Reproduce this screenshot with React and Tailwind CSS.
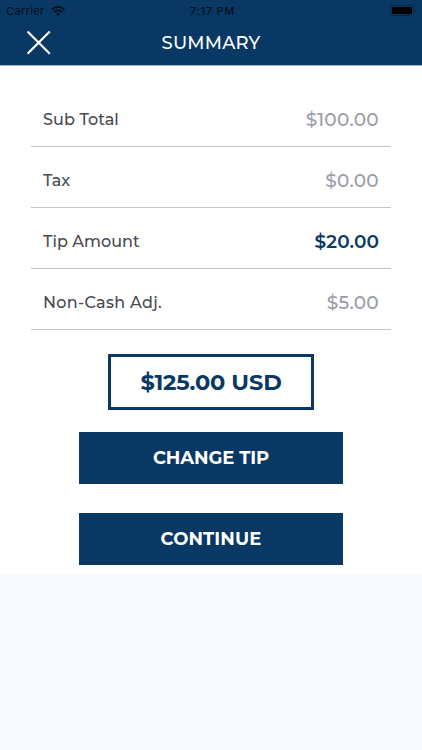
const rows = [
  {
    label: "Sub Total",
    value: "$100.00",
    labelClass: "tracking-[0.1px]",
    valueClass: "tracking-[0.3px] font-medium text-[#9b9ca6]",
  },
  {
    label: "Tax",
    value: "$0.00",
    labelClass: "tracking-[-0.1px]",
    valueClass: "tracking-[0.3px] font-medium text-[#9b9ca6]",
  },
  {
    label: "Tip Amount",
    value: "$20.00",
    labelClass: "tracking-[0.05px]",
    valueClass: "tracking-[0.1px] font-semibold text-[#083863]",
  },
  {
    label: "Non-Cash Adj.",
    value: "$5.00",
    labelClass: "tracking-[0.3px]",
    valueClass: "tracking-[0.3px] font-medium text-[#9b9ca6]",
  },
];

export default function App() {
  return (
    <div className="h-[750px] w-[422px] overflow-hidden bg-[#f8faff] font-['Montserrat','Inter',sans-serif]">
      <Header />
      <main className="flex h-[509px] flex-col items-center bg-white pt-[21px]">
        <div className="w-[360px]">
          {rows.map((row) => (
            <SummaryRow key={row.label} row={row} />
          ))}
        </div>

        {/* total */}
        <div className="mt-[24px] flex h-[56px] w-[206px] items-center justify-center border-3 border-[#083863] pt-[2px] text-[22.5px] font-bold whitespace-nowrap text-[#083863]">
          <span className="tracking-[-0.15px]">$125.00 USD</span>
        </div>

        <ActionButton className="mt-[22px]">
          <span className="tracking-[-0.1px]">CHANGE TIP</span>
        </ActionButton>
        <ActionButton className="mt-[29.5px]">
          <span className="tracking-[0.1px]">CONTINUE</span>
        </ActionButton>
      </main>
    </div>
  );
}

function Header() {
  return (
    <header className="relative h-[65px] bg-[#083863] shadow-[0_1px_0_#9fb3c5]">
      {/* status bar */}
      <div className="grid h-[21px] grid-cols-3 items-center pr-[5px] pl-[6px] font-['Inter',sans-serif] text-[11px] text-[#03101d]">
        <div className="flex items-center gap-[6px]">
          <span className="pt-px tracking-[0.35px]">Carrier</span>
          <WifiIcon />
        </div>
        <span className="pt-px pl-[2px] text-center font-medium tracking-[0.7px]">7:17 PM</span>
        <BatteryIcon />
      </div>

      <div className="grid h-[44px] grid-cols-[77px_1fr_77px] items-center">
        <button className="flex justify-center" aria-label="Close">
          <svg width="24" height="24" viewBox="0 0 24 24" fill="none">
            <path
              d="M1.3 1.3L22 22M22 1.3L1.3 22"
              stroke="white"
              strokeWidth="2.2"
              strokeLinecap="square"
            />
          </svg>
        </button>
        <h1 className="text-center text-[18px] font-medium tracking-[0.2px] text-white">
          SUMMARY
        </h1>
      </div>
    </header>
  );
}

function SummaryRow({ row }) {
  return (
    <div className="flex h-[61px] items-center justify-between border-b border-[#c5c5c8] px-[12px] pt-[7px] whitespace-nowrap">
      <span className={`text-[16px] font-medium text-[#48494f] ${row.labelClass}`}>
        {row.label}
      </span>
      <span className={`text-[18.5px] ${row.valueClass}`}>{row.value}</span>
    </div>
  );
}

function ActionButton({ className, children }) {
  return (
    <button
      className={`flex h-[51.5px] w-[264px] items-center justify-center bg-[#083863] pt-[2px] text-[18px] font-bold text-white ${className}`}
    >
      {children}
    </button>
  );
}

function WifiIcon() {
  return (
    <svg width="14" height="10" viewBox="0 0 14 10" fill="none" stroke="#03101d">
      <path d="M0.7 3.5C4.3 0 9.7 0 13.3 3.5" strokeWidth="1.9" />
      <path d="M3 6C5.2 3.8 8.8 3.8 11 6" strokeWidth="1.8" />
      <path d="M7 10L4.8 7.8C6 6.7 8 6.7 9.2 7.8Z" fill="#03101d" stroke="none" />
    </svg>
  );
}

function BatteryIcon() {
  return (
    <svg className="justify-self-end" width="27" height="11" viewBox="0 0 27 11">
      <rect x="0.5" y="0.5" width="23" height="10" rx="2" fill="none" stroke="#052644" />
      <rect x="2" y="2" width="20" height="7" rx="0.7" fill="black" />
      <path d="M25 3.7C26.5 4.2 26.5 6.8 25 7.3Z" fill="#052644" />
    </svg>
  );
}
